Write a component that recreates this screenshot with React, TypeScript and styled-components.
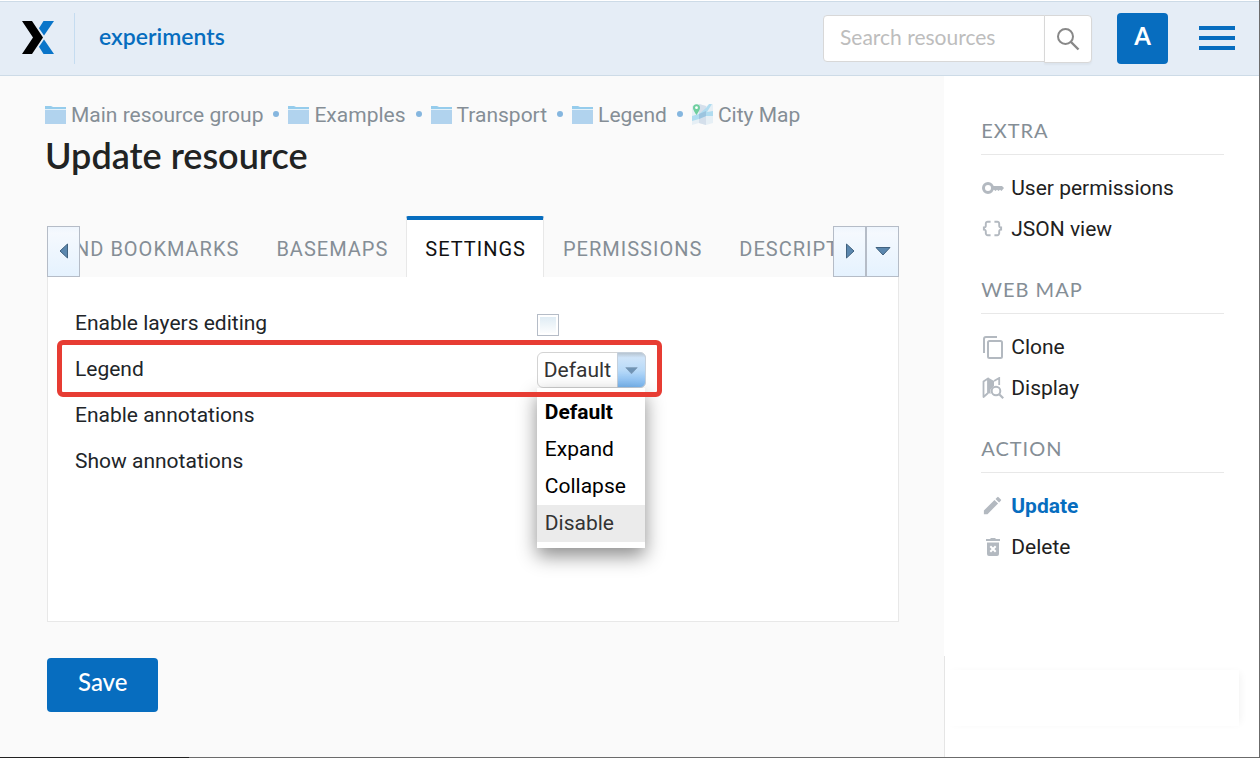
import React, { useState } from "react";
import styled, { createGlobalStyle } from "styled-components";
import { MdDataObject, MdEdit } from "react-icons/md";

const roboto = `Roboto, "Liberation Sans", sans-serif`;
const lato = `Lato, "Liberation Sans", sans-serif`;
const blue = "#076dbf";

const GlobalStyle = createGlobalStyle`
  * { box-sizing: border-box; }
  body { margin: 0; background: #fff; font-family: ${roboto}; font-size: 21px; color: #212529; }
  button, input, select { font: inherit; margin: 0; }
  a { color: inherit; text-decoration: none; }
`;

const Page = styled.div`
  display: flex;
  flex-direction: column;
  min-height: 100vh;
  padding-top: 1px;
  border-right: 1px solid #6b6b6b;
`;

const Header = styled.header`
  display: flex;
  align-items: center;
  height: 75px;
  padding: 0 24px 0 22px;
  background: #e5edf6;
  border-top: 1px solid #cddbe7;
  border-bottom: 1px solid #cddbe7;
`;

const LogoLink = styled.a`
  display: flex;
  align-items: center;
  height: 51px;
  padding: 0 20px 2px 0;
  border-right: 1px solid #c5dcf0;
`;

const SiteName = styled.a`
  flex: 1;
  padding: 0 24px 6px;
  font-family: ${lato};
  font-size: 23px;
  font-weight: 600;
  color: ${blue};
`;

const Search = styled.form`
  display: flex;
  align-items: flex-start;
  height: 48px;
`;

const SearchInput = styled.input`
  width: 222px;
  height: 47px;
  padding: 0 16px 4px;
  border: 1px solid #d8d8d8;
  border-radius: 4px 0 0 4px;
  background: #fff;
  font-family: ${lato};
  font-size: 21px;
  outline: none;
  &::placeholder { color: #bdbdbd; opacity: 1; }
`;

const SearchButton = styled.button`
  display: grid;
  place-items: center;
  width: 48px;
  height: 48px;
  margin-left: -1px;
  padding: 0;
  border: 1px solid #d8d8d8;
  border-radius: 0 4px 4px 0;
  background: #fff;
  box-shadow: 0 2px 2px rgba(0, 0, 0, 0.04);
`;

const Avatar = styled.button`
  width: 51px;
  height: 51px;
  margin: 0 31px 0 25px;
  padding: 0 0 6px;
  border: 0;
  border-radius: 4px;
  background: ${blue};
  color: #fff;
  font-family: ${lato};
  font-size: 24px;
  font-weight: 700;
`;

const MenuButton = styled.button`
  display: flex;
  flex-direction: column;
  gap: 6px;
  width: 36px;
  padding: 0 0 2px;
  border: 0;
  background: none;
`;

const MenuBar = styled.span`
  height: 4px;
  background: ${blue};
`;

const Body = styled.div`
  display: flex;
  flex: 1;
`;

const Main = styled.main`
  flex: 1;
  min-width: 0;
  padding: 26px 45px 45px 47px;
  background: #fafafa;
`;

const Breadcrumbs = styled.nav`
  display: flex;
  flex-wrap: wrap;
  align-items: center;
  margin-left: -2px;
  line-height: 26px;
  color: #858e96;
`;

const Crumb = styled.a`
  display: flex;
  align-items: center;
  gap: 5px;
  svg { margin-bottom: 2px; }
`;

const Dot = styled.span`
  width: 6px;
  height: 6px;
  margin: 0 9px 2px 10px;
  border-radius: 50%;
  background: #85b6df;
`;

const Title = styled.h1`
  margin: 3px 0 37px -2px;
  font-family: ${lato};
  font-size: 36px;
  font-weight: 600;
  line-height: 48px;
  color: #212323;
`;

const TabStrip = styled.div`
  display: flex;
  align-items: flex-end;
  height: 61px;
`;

const TabViewport = styled.div`
  flex: 1;
  min-width: 0;
  overflow: hidden;
`;

const TabList = styled.div`
  display: flex;
  margin-left: -38px;
`;

const Tab = styled.button<{ $active?: boolean }>`
  flex: none;
  height: 61px;
  padding: 0 17px 0 18px;
  border: solid ${(p) => (p.$active ? "#e8e8e8" : "transparent")};
  border-width: 0 1px;
  border-top: 4px solid ${(p) => (p.$active ? blue : "transparent")};
  border-radius: 2px 2px 0 0;
  background: ${(p) => (p.$active ? "#fff" : "transparent")};
  color: ${(p) => (p.$active ? "#111" : "#858e96")};
  font-size: 20px;
  letter-spacing: 1px;
  text-transform: uppercase;
`;

const ScrollButton = styled.button`
  display: grid;
  place-items: center;
  width: 33px;
  height: 51px;
  padding: 0 0 2px;
  border: 1px solid #b5bcc7;
  background: linear-gradient(#eef5fd, #f5f9fe 12%, #e5f2fe);
`;

const Panel = styled.section`
  min-height: 345px;
  padding: 23px 27px;
  background: #fff;
  border: 1px solid #e8e8e8;
  border-top: 0;
`;

const FieldRow = styled.div`
  position: relative;
  display: flex;
  align-items: center;
  height: 46px;
`;

const Label = styled.label`
  flex: 0 0 58%;
`;

const Highlight = styled.div`
  position: absolute;
  z-index: 3;
  top: -6px;
  left: -18px;
  width: calc(58% + 143px);
  height: 57px;
  border: 5px solid #e73c33;
  border-radius: 6px;
  pointer-events: none;
`;

const Checkbox = styled.input`
  appearance: none;
  width: 22px;
  height: 22px;
  margin-top: 3px;
  border: 1px solid #b5bcc7;
  background: linear-gradient(#dceaf3, #fff);
  box-shadow: inset 0 0 0 2px #fff;
`;

const SelectBox = styled.div`
  position: relative;
  width: 109px;
  height: 36px;
  margin-top: 2px;
`;

const Select = styled.select`
  appearance: none;
  display: block;
  width: 100%;
  height: 36px;
  padding: 0 30px 0 6px;
  border: 1px solid #d3d3d3;
  border-radius: 6px;
  background: #fff;
  color: #333;
  outline: none;
`;

const SelectArrow = styled.span`
  position: absolute;
  top: 0;
  right: 0;
  display: grid;
  place-items: center;
  width: 29px;
  height: 36px;
  border: 1px solid #c5d0dc;
  border-radius: 0 6px 6px 0;
  background: linear-gradient(#b7c4d1, #cfe4f9 14%, #b9daf8 50%, #7ab7f2);
  pointer-events: none;
`;

const Options = styled.ul`
  position: absolute;
  z-index: 2;
  top: 36px;
  left: 0;
  width: 108px;
  margin: 0;
  padding: 6px 0;
  list-style: none;
  background: #fff;
  color: #000;
  box-shadow: 0 8px 18px rgba(0, 0, 0, 0.45);
`;

const Option = styled.li<{ $selected?: boolean; $hovered?: boolean }>`
  padding: 0 8px;
  line-height: 37px;
  font-weight: ${(p) => (p.$selected ? 700 : 400)};
  background: ${(p) => (p.$hovered ? "#ebebeb" : "transparent")};
  color: ${(p) => (p.$hovered ? "#333" : "#000")};
`;

const SaveButton = styled.button`
  display: block;
  height: 54px;
  margin-top: 36px;
  padding: 0 31px 7px;
  border: 0;
  border-radius: 4px;
  background: ${blue};
  color: #fff;
  font-family: ${lato};
  font-size: 24px;
  font-weight: 500;
`;

const Sidebar = styled.aside`
  display: flex;
  flex-direction: column;
  width: 25%;
  background: #fff;
`;

const SideContent = styled.div`
  display: flex;
  flex-direction: column;
  gap: 28px;
  height: 580px;
  padding: 42px 35px 0 37px;
`;

const SideFoot = styled.div`
  flex: 1;
  padding: 14px 20px 30px 0;
  border-left: 1px solid #e5e5e5;
  overflow: hidden;
`;

const SideCard = styled.div`
  height: 56px;
  background: #fff;
  box-shadow: 4px 0 8px -3px rgba(0, 0, 0, 0.06);
`;

const SideHeading = styled.h2`
  margin: 0 0 12px;
  padding-bottom: 12px;
  border-bottom: 1px solid #e8e8e8;
  font-family: ${lato};
  font-size: 20px;
  font-weight: 400;
  line-height: 24px;
  letter-spacing: 1px;
  text-transform: uppercase;
  color: #858e96;
`;

const SideLink = styled.a<{ $active?: boolean }>`
  display: flex;
  align-items: center;
  gap: 7px;
  height: 41px;
  font-weight: ${(p) => (p.$active ? 700 : 400)};
  color: ${(p) => (p.$active ? blue : "#212121")};
  svg { flex: none; color: #b3b9c0; }
`;

const BottomEdge = styled.div`
  height: 1px;
  background: linear-gradient(90deg, #222 15%, #6b6b6b 15%);
`;

const Logo = () => (
  <svg width="32" height="33" viewBox="0 0 32 33" aria-hidden="true">
    <path d="M0 0h10L21 16.500 10 33H0l11-16.500z" fill="#000" />
    <path d="M21.500 0H32L22 14.500 17 7.200z" fill="#0a75c9" />
    <path d="M22 18.500L32 33H21.500L17 25.800z" fill="#0a75c9" />
  </svg>
);

const SearchIcon = () => (
  <svg width="24" height="24" viewBox="0 0 24 24" fill="none" stroke="#888" strokeWidth="2" aria-hidden="true">
    <circle cx="9.500" cy="9.500" r="7.500" />
    <path d="M15 15l7.500 7.500" strokeWidth="2.400" />
  </svg>
);

const FolderIcon = () => (
  <svg width="21" height="19" viewBox="0 0 21 19" aria-hidden="true">
    <path d="M0 1h6l2 1h13v3H0z" fill="#95ccec" />
    <rect y="5" width="21" height="14" fill="#b1d3ee" />
    <path d="M0 4.500h21" stroke="#e3f1fa" />
  </svg>
);

const CityMapIcon = () => (
  <svg width="21" height="21" viewBox="0 0 21 21" aria-hidden="true">
    <path d="M0 2l7-2 7 2 7-2v19l-7 2-7-2-7 2z" fill="#e6eff5" />
    <path d="M7 0l7 2v19l-7-2z" fill="#d4dfeb" />
    <path d="M0 12l7-2 7-6 3-4h3l-5 8 6-1v5h-7l-7 3-7 2z" fill="#b0dcf0" />
    <path d="M7 10l7-3v5l-7 3z" fill="#9cc4df" />
    <path d="M4.500 11C2 7 1 5.500 1 3.700a3.500 3.500 0 0 1 7 0C8 5.500 7 7 4.500 11z" fill="#6fcf9f" />
    <circle cx="4.500" cy="3.700" r="1.400" fill="#fff" />
  </svg>
);

const KeyIcon = () => (
  <svg width="23" height="22" viewBox="0 0 23 22" aria-hidden="true">
    <circle cx="7" cy="11" r="4.500" fill="none" stroke="currentColor" strokeWidth="3" />
    <path d="M11 9h10l2 2-2.500 3-1.500-1.200-1.500 1.200-1.500-1.200-1.500 1.200-1.500-1.200H11z" fill="currentColor" />
  </svg>
);

const CloneIcon = () => (
  <svg width="23" height="24" viewBox="0 0 23 24" fill="none" stroke="currentColor" strokeWidth="2" aria-hidden="true">
    <path d="M16 2H5a2 2 0 0 0-2 2v14" />
    <rect x="7" y="6" width="14" height="17" rx="1.500" />
  </svg>
);

const DisplayIcon = () => (
  <svg width="23" height="22" viewBox="-1 0 23 22" aria-hidden="true">
    <path d="M1.500 4.500L6 1.500v14.500l-4.500 4z" fill="none" stroke="currentColor" strokeWidth="1.800" strokeLinejoin="round" />
    <path d="M6 .5l6 3.500v5l-3.500 3.500V17L6 15.500z" fill="currentColor" />
    <path d="M12 4l5.200-3v7" fill="none" stroke="currentColor" strokeWidth="1.800" />
    <circle cx="14" cy="14" r="4.300" fill="#fff" stroke="currentColor" strokeWidth="2" />
    <path d="M17.200 17.200l4 4" stroke="currentColor" strokeWidth="2.200" />
  </svg>
);

const TrashIcon = () => (
  <svg width="23" height="22" viewBox="-1 0 23 22" aria-hidden="true">
    <path d="M4 3h4l1-1h4l1 1h4v2H4zM5 6.500h12V18a2 2 0 0 1-2 2H7a2 2 0 0 1-2-2z" fill="currentColor" />
    <path d="M8.300 10.300l5.400 5.400M13.700 10.300l-5.400 5.400" stroke="#fff" strokeWidth="2" />
  </svg>
);

const Arrow = ({ dir, soft }: { dir: "left" | "right" | "down"; soft?: boolean }) => {
  const d = { left: "M11.500 1v14L4 8z", right: "M4.500 1v14L12 8z", down: "M1 4.500h14L8 12z" }[dir];
  return (
    <svg width={soft ? 13 : 16} height={soft ? 13 : 16} viewBox="0 0 16 16" aria-hidden="true">
      <path d={d} fill={soft ? "#6f93b5" : "#5b87ae"} stroke={soft ? "#7d9ab6" : "#41627f"} />
    </svg>
  );
};

const crumbs = ["Main resource group", "Examples", "Transport", "Legend", "City Map"];
const tabs = ["and bookmarks", "Basemaps", "Settings", "Permissions", "Description"];
const legendOptions = ["Default", "Expand", "Collapse", "Disable"];

const sections = [
  {
    title: "Extra",
    links: [
      { text: "User permissions", icon: <KeyIcon /> },
      { text: "JSON view", icon: <MdDataObject size={23} /> },
    ],
  },
  {
    title: "Web map",
    links: [
      { text: "Clone", icon: <CloneIcon /> },
      { text: "Display", icon: <DisplayIcon /> },
    ],
  },
  {
    title: "Action",
    links: [
      { text: "Update", icon: <MdEdit size={23} />, active: true },
      { text: "Delete", icon: <TrashIcon /> },
    ],
  },
];

export default function App() {
  const [tab, setTab] = useState("Settings");
  const [legend, setLegend] = useState("Default");
  return (
    <>
      <GlobalStyle />
      <Page>
        <Header>
          <LogoLink href="#" aria-label="Home"><Logo /></LogoLink>
          <SiteName href="#">experiments</SiteName>
          <Search>
            <SearchInput type="text" placeholder="Search resources" aria-label="Search resources" />
            <SearchButton type="button" aria-label="Search"><SearchIcon /></SearchButton>
          </Search>
          <Avatar type="button">A</Avatar>
          <MenuButton type="button" aria-label="Menu"><MenuBar /><MenuBar /><MenuBar /></MenuButton>
        </Header>
        <Body>
          <Main>
            <Breadcrumbs aria-label="Breadcrumb">
              {crumbs.map((name, i) => (
                <React.Fragment key={name}>
                  {i > 0 && <Dot />}
                  <Crumb href="#">{name === "City Map" ? <CityMapIcon /> : <FolderIcon />}{name}</Crumb>
                </React.Fragment>
              ))}
            </Breadcrumbs>
            <Title>Update resource</Title>
            <TabStrip>
              <ScrollButton type="button" aria-label="Scroll tabs left"><Arrow dir="left" /></ScrollButton>
              <TabViewport>
                <TabList role="tablist">
                  {tabs.map((name) => (
                    <Tab key={name} type="button" role="tab" aria-selected={name === tab} $active={name === tab} onClick={() => setTab(name)}>
                      {name}
                    </Tab>
                  ))}
                </TabList>
              </TabViewport>
              <ScrollButton type="button" aria-label="Scroll tabs right"><Arrow dir="right" /></ScrollButton>
              <ScrollButton type="button" aria-label="All tabs"><Arrow dir="down" /></ScrollButton>
            </TabStrip>
            <Panel>
              <FieldRow>
                <Label htmlFor="editing">Enable layers editing</Label>
                <Checkbox id="editing" type="checkbox" />
              </FieldRow>
              <FieldRow>
                <Label htmlFor="legend">Legend</Label>
                <SelectBox>
                  <Select id="legend" value={legend} onChange={(e) => setLegend(e.target.value)}>
                    {legendOptions.map((o) => <option key={o}>{o}</option>)}
                  </Select>
                  <SelectArrow><Arrow dir="down" soft /></SelectArrow>
                  <Options role="listbox" aria-label="Legend">
                    {legendOptions.map((o) => (
                      <Option key={o} role="option" aria-selected={o === legend} $selected={o === legend} $hovered={o === "Disable"} onClick={() => setLegend(o)}>
                        {o}
                      </Option>
                    ))}
                  </Options>
                </SelectBox>
                <Highlight />
              </FieldRow>
              <FieldRow><Label as="span">Enable annotations</Label></FieldRow>
              <FieldRow><Label as="span">Show annotations</Label></FieldRow>
            </Panel>
            <SaveButton type="button">Save</SaveButton>
          </Main>
          <Sidebar>
            <SideContent>
              {sections.map((s) => (
                <nav key={s.title} aria-label={s.title}>
                  <SideHeading>{s.title}</SideHeading>
                  {s.links.map((l) => (
                    <SideLink key={l.text} href="#" $active={"active" in l}>{l.icon}{l.text}</SideLink>
                  ))}
                </nav>
              ))}
            </SideContent>
            <SideFoot><SideCard /></SideFoot>
          </Sidebar>
        </Body>
        <BottomEdge />
      </Page>
    </>
  );
}
